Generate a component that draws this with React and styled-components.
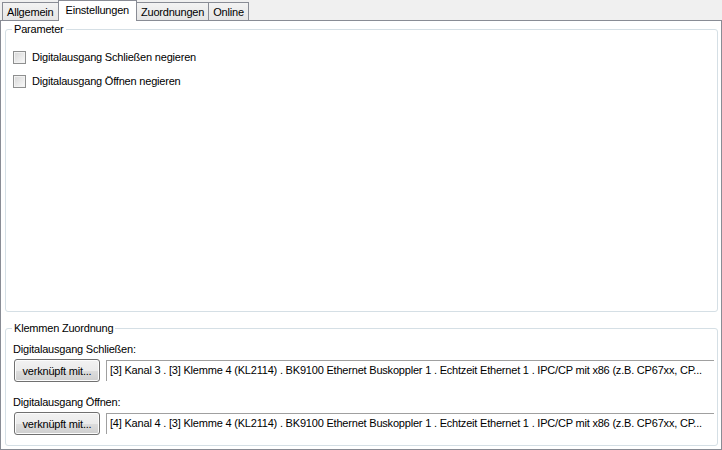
import React from 'react'
import styled, { createGlobalStyle } from 'styled-components';

const Global = createGlobalStyle`
    html, body { margin: 0; padding: 0; background: #f0f0f0; }
    body {
        font-family: "Liberation Sans", Arial, sans-serif;
        font-size: 11px;
        letter-spacing: -0.2px;
        color: #000000;
    }
`

const Window = styled.div`
    width: 722px;
    height: 450px;
    display: flex;
    flex-direction: column;
    background: #f0f0f0;
`

const TabStrip = styled.div`
    height: 21px;
    display: flex;
    align-items: flex-end;
    padding-left: 2px;
    margin-bottom: -1px;
    position: relative;
    z-index: 1;
`

const Tab = styled.div`
    box-sizing: border-box;
    display: flex;
    align-items: center;
    margin-left: -1px;
    border: 1px solid #898c95;
    border-bottom: none;
    white-space: nowrap;
    ${({ active }) => active ? `
        height: 21px;
        padding: 0 7px 2px;
        background: #ffffff;
    ` : `
        height: 18px;
        margin-bottom: 1px;
        padding: 1px 4px 0;
        background: linear-gradient(#f3f3f3, #e5e5e5);
    `}
    &:first-child { margin-left: 0; }
`

const Panel = styled.div`
    box-sizing: border-box;
    height: 430px;
    width: 722px;
    border: 1px solid #898c95;
    background: #ffffff;
    display: flex;
    flex-direction: column;
    padding: 2px 3px 3px 4px;
`

const Group = styled.fieldset`
    margin: 0;
    padding: 0 3px 0 7px;
    border: 1px solid #d5dfe5;
    border-radius: 3px;
    min-width: 0;
    ${({ grow }) => grow ? `flex: 1;` : ``}
    & + & { margin-top: 10px; }
`

const Legend = styled.legend`
    padding: 0 2px;
    margin-left: -1px;
    line-height: 13px;
`

const CheckList = styled.div`
    display: flex;
    flex-direction: column;
    gap: 11px;
    padding-top: 15px;
`

const CheckRow = styled.label`
    display: flex;
    align-items: center;
    gap: 6px;
    line-height: 13px;
`

const Box = styled.span`
    box-sizing: border-box;
    width: 13px;
    height: 13px;
    border: 1px solid #8e8f8f;
    background: linear-gradient(135deg, #d6d6d6, #fafafa);
    box-shadow: inset 0 0 0 1px #f2f2f2;
`

const Assign = styled.div`
    display: flex;
    flex-direction: column;
    padding: 8px 0 10px;
`

const FieldLabel = styled.div`
    line-height: 13px;
    margin-bottom: 3px;
`

const LinkRow = styled.div`
    display: flex;
    align-items: flex-start;
    gap: 6px;
    padding-left: 1px;
    & + ${FieldLabel} { margin-top: 14px; }
`

const Button = styled.button`
    box-sizing: border-box;
    width: 86px;
    height: 23px;
    font: inherit;
    letter-spacing: inherit;
    color: #000000;
    border: 1px solid #707070;
    border-radius: 3px;
    box-shadow: inset 0 0 0 1px #fcfcfc;
    background: linear-gradient(#f2f2f2 0%, #ebebeb 50%, #dddddd 51%, #cfcfcf 100%);
    padding: 0;
    flex-shrink: 0;
`

const LinkField = styled.div`
    box-sizing: border-box;
    flex: 1;
    min-width: 0;
    height: 21px;
    margin-top: 1px;
    border-top: 1px solid #a0a0a0;
    border-left: 1px solid #a0a0a0;
    padding: 3px 0 0 3px;
    line-height: 13px;
    white-space: nowrap;
    overflow: hidden;
    text-overflow: ellipsis;
`

const tabs = ['Allgemein', 'Einstellungen', 'Zuordnungen', 'Online']

const links = [
    {
        label: 'Digitalausgang Schließen:',
        value: '[3] Kanal 3 . [3] Klemme 4 (KL2114) . BK9100 Ethernet Buskoppler 1 . Echtzeit Ethernet 1 . IPC/CP mit x86 (z.B. CP67xx, CP...',
    },
    {
        label: 'Digitalausgang Öffnen:',
        value: '[4] Kanal 4 . [3] Klemme 4 (KL2114) . BK9100 Ethernet Buskoppler 1 . Echtzeit Ethernet 1 . IPC/CP mit x86 (z.B. CP67xx, CP...',
    },
]

const App = () => {
    return (
        <>
            <Global />
            <Window>
                <TabStrip>
                    {tabs.map((t) => (
                        <Tab key={t} active={t === 'Einstellungen'}>{t}</Tab>
                    ))}
                </TabStrip>
                <Panel>
                    <Group grow>
                        <Legend>Parameter</Legend>
                        <CheckList>
                            <CheckRow><Box />Digitalausgang Schließen negieren</CheckRow>
                            <CheckRow><Box />Digitalausgang Öffnen negieren</CheckRow>
                        </CheckList>
                    </Group>
                    <Group>
                        <Legend>Klemmen Zuordnung</Legend>
                        <Assign>
                            {links.map((l) => (
                                <React.Fragment key={l.label}>
                                    <FieldLabel>{l.label}</FieldLabel>
                                    <LinkRow>
                                        <Button>verknüpft mit...</Button>
                                        <LinkField>{l.value}</LinkField>
                                    </LinkRow>
                                </React.Fragment>
                            ))}
                        </Assign>
                    </Group>
                </Panel>
            </Window>
        </>
    )
}

export default App
